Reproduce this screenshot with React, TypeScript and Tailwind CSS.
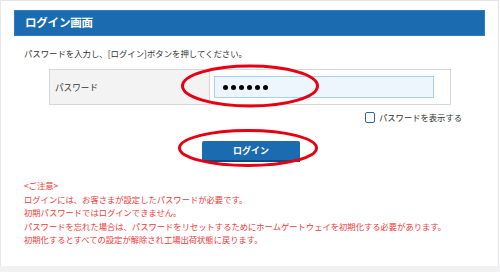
import React from "react";

const notes = [
  "<ご注意>",
  "ログインには、お客さまが設定したパスワードが必要です。",
  "初期パスワードではログインできません。",
  "パスワードを忘れた場合は、パスワードをリセットするためにホームゲートウェイを初期化する必要があります。",
  "初期化するとすべての設定が解除され工場出荷状態に戻ります。",
];

export default function App() {
  return (
    <div
      className="relative w-[500px] h-[272px] flex flex-col bg-white overflow-hidden"
      style={{ fontFamily: '"Noto Sans CJK JP", "Noto Sans", sans-serif' }}
    >
      <div className="flex-1 flex flex-col border-t border-r border-l border-[#e4e6ea] mr-[1px]">
        {/* Title bar */}
        <div className="mt-[9px] mx-[13px] h-[26px] flex items-center bg-[#1a6bb0] border border-[#2f7bbd] pl-[10px]">
          <span className="text-white text-[11.5px] font-bold tracking-[-0.2px]">ログイン画面</span>
        </div>

        {/* Instruction */}
        <p className="mt-[11px] ml-[23px] text-[8.4px] leading-[13px] text-[#333]">
          パスワードを入力し、[ログイン]ボタンを押してください。
        </p>

        {/* Password row */}
        <div className="mt-[9px] ml-[48px] w-[402px] h-[36px] flex border border-[#d6d6d6]">
          <div className="w-[160px] bg-[#f3f3f3] border-r border-[#d6d6d6] flex items-center pl-[5px]">
            <span className="text-[8.6px] text-[#333]">パスワード</span>
          </div>
          <div className="flex-1 flex items-center pl-[4px]">
            <div className="w-[220px] h-[22px] bg-[#eef6fd] border border-[#a9cfee] flex items-center gap-[3px] pl-[8px]">
              {[0, 1, 2, 3, 4, 5].map((i) => (
                <span key={i} className="w-[5px] h-[5px] rounded-full bg-black" />
              ))}
            </div>
          </div>
        </div>

        {/* Show password */}
        <div className="mt-[6px] ml-[364px] h-[12px] flex items-center gap-[4px]">
          <span className="w-[10px] h-[11px] rounded-[2px] border-[1.5px] border-[#2c6aa5] bg-white" />
          <span className="text-[8.3px] text-[#333]">パスワードを表示する</span>
        </div>

        {/* Login button */}
        <div className="mt-[18px] flex pl-[201px]">
          <button className="w-[98px] h-[21px] bg-[#1a6bb0] border-b-2 border-[#0e4a82] rounded-t-[2px] text-white text-[9px] font-bold flex items-center justify-center">
            ログイン
          </button>
        </div>

        {/* Notes */}
        <div className="mt-[17px] ml-[23px] text-[8.3px] leading-[13.5px] text-[#f03a3a]">
          {notes.map((n) => (
            <p key={n}>{n}</p>
          ))}
        </div>
      </div>
      <div className="h-[6px] bg-[#f2f2f2]" />

      {/* Red annotation ellipses */}
      <svg className="absolute inset-0 pointer-events-none" width="500" height="272">
        <ellipse cx="250" cy="86" rx="67.5" ry="20" fill="none" stroke="#e60012" strokeWidth="3" />
        <ellipse cx="248" cy="148" rx="68.5" ry="17.5" fill="none" stroke="#e60012" strokeWidth="3" />
      </svg>
    </div>
  );
}
